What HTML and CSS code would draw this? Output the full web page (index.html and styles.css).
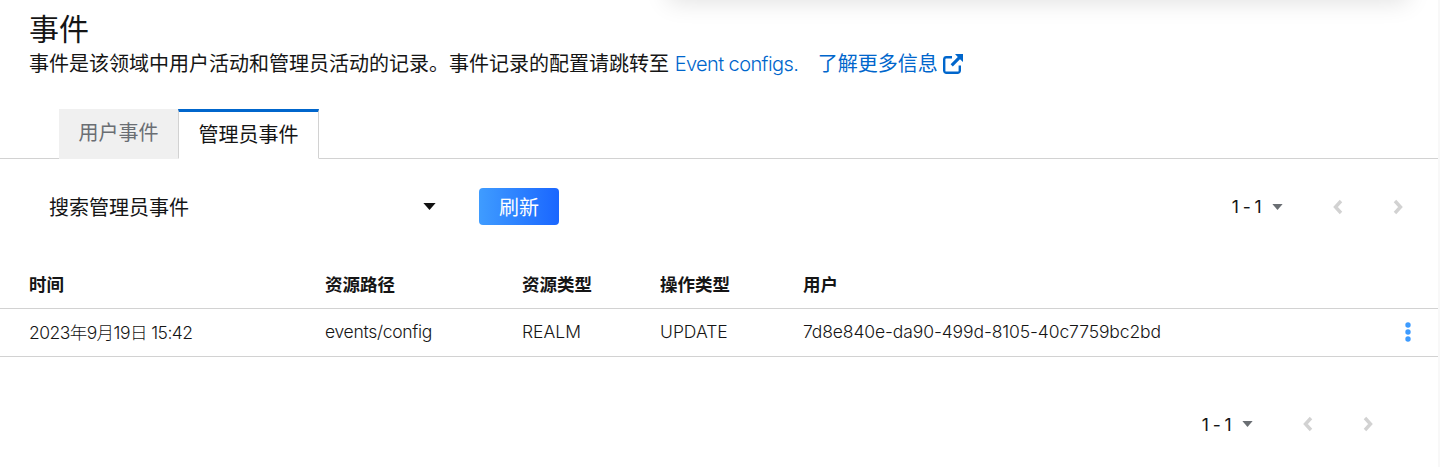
FILE: index.html
```html
<!DOCTYPE html>
<html lang="zh-CN">
<head>
<meta charset="UTF-8">
<title>事件</title>
<link rel="stylesheet" href="styles.css">
</head>
<body>
<div class="top-shadow"></div>
<header class="page-head">
    <h1>事件</h1>
    <p class="intro">事件是该领域中用户活动和管理员活动的记录。事件记录的配置请跳转至 <a href="#" class="configs">Event configs.</a>
        <a href="#" class="more">了解更多信息<svg class="ext-icon" viewBox="0 0 20 20"><path d="M9 3.200H3A2 2 0 0 0 1.200 5V17A2 2 0 0 0 3 18.800H15A2 2 0 0 0 16.800 17V11.500" fill="none" stroke="#06c" stroke-width="2.400"/><path d="M12 0H20V8L17 5.200L9.800 12.400L7.600 10.200L14.800 3Z" fill="#06c"/></svg></a>
    </p>
</header>

<nav class="tabs">
    <a href="#" class="tab">用户事件</a>
    <a href="#" class="tab active">管理员事件</a>
</nav>

<div class="toolbar">
    <div class="search-select">
        <span>搜索管理员事件</span>
        <svg class="caret" viewBox="0 0 14 8"><path d="M0 0H14L7 8Z" fill="#111"/></svg>
    </div>
    <button class="refresh">刷新</button>
    <div class="pager">
        <span class="range">1 - 1</span>
        <svg class="pager-caret" viewBox="0 0 12 7"><path d="M0 0H12L6 7Z" fill="#6a6e73"/></svg>
        <svg class="chev" viewBox="0 0 10 16"><path d="M8 2L2.500 8L8 14" fill="none" stroke="#d2d2d2" stroke-width="3.400"/></svg>
        <svg class="chev" viewBox="0 0 10 16"><path d="M2 2L7.500 8L2 14" fill="none" stroke="#d2d2d2" stroke-width="3.400"/></svg>
    </div>
</div>

<table class="events">
    <thead>
        <tr>
            <th class="col-time">时间</th>
            <th class="col-path">资源路径</th>
            <th class="col-type">资源类型</th>
            <th class="col-op">操作类型</th>
            <th>用户</th>
            <th class="col-menu"></th>
        </tr>
    </thead>
    <tbody>
        <tr>
            <td class="col-time">2023年9月19日 15:42</td>
            <td class="col-path">events/config</td>
            <td class="col-type">REALM</td>
            <td class="col-op">UPDATE</td>
            <td class="col-user">7d8e840e-da90-499d-8105-40c7759bc2bd</td>
            <td class="col-menu">
                <svg class="kebab" viewBox="0 0 6 20"><circle cx="3" cy="3" r="2.700"/><circle cx="3" cy="10" r="2.700"/><circle cx="3" cy="17" r="2.700"/></svg>
            </td>
        </tr>
    </tbody>
</table>

<div class="foot-pager">
    <div class="pager">
        <span class="range">1 - 1</span>
        <svg class="pager-caret" viewBox="0 0 12 7"><path d="M0 0H12L6 7Z" fill="#6a6e73"/></svg>
        <svg class="chev" viewBox="0 0 10 16"><path d="M8 2L2.500 8L8 14" fill="none" stroke="#d2d2d2" stroke-width="3.400"/></svg>
        <svg class="chev" viewBox="0 0 10 16"><path d="M2 2L7.500 8L2 14" fill="none" stroke="#d2d2d2" stroke-width="3.400"/></svg>
    </div>
</div>
</body>
</html>
```

FILE: styles.css
```css
* {
    box-sizing: border-box;
}
html {
    height: 467px;
    overflow: hidden;
    background: #f8f8f8;
}
body {
    margin: 0;
    width: 1438px;
    height: 467px;
    overflow: hidden;
    position: relative;
    background: #fff;
    color: #151515;
    font-family: "Inter", "Noto Sans CJK SC", sans-serif;
    font-size: 17.5px;
    font-weight: 300;
}
a {
    color: #06c;
    text-decoration: none;
}

/* leftover shadow of the menu scrolled off above */
.top-shadow {
    position: absolute;
    top: -40px;
    left: 668px;
    width: 740px;
    height: 40px;
    box-shadow: 0 2px 24px rgba(3, 3, 3, 0.12);
}

.page-head {
    padding: 10px 29px 0;
    height: 109px;
}
h1 {
    margin: 0;
    font-size: 30px;
    font-weight: 400;
    line-height: 39px;
}
.intro {
    margin: 0;
    font-size: 20px;
    font-weight: 400;
    line-height: 30px;
    color: #151515;
}
.configs {
    font-weight: 300;
    letter-spacing: -0.6px;
}
.more {
    margin-left: 14px;
}
.ext-icon {
    width: 20px;
    height: 20px;
    vertical-align: -3px;
    margin-left: 5px;
}

.tabs {
    display: flex;
    height: 50px;
    padding-left: 59px;
    border-bottom: 1px solid #d2d2d2;
}
.tab {
    height: 50px;
    padding: 0 19.5px;
    background: #f0f0f0;
    color: #6a6e73;
    font-size: 20px;
    font-weight: 400;
    line-height: 49px;
    white-space: nowrap;
}
.tab.active {
    background: #fff;
    color: #151515;
    border-top: 3px solid #06c;
    border-left: 1px solid #d2d2d2;
    border-right: 1px solid #d2d2d2;
    border-bottom: 1px solid #fff;
    line-height: 46px;
}

.toolbar {
    display: flex;
    align-items: center;
    height: 37px;
    margin-top: 29px;
    padding-left: 29px;
}
.search-select {
    display: flex;
    align-items: center;
    justify-content: space-between;
    width: 408px;
    padding: 0 1px 0 20px;
    font-size: 20px;
    font-weight: 400;
    color: #151515;
}
.caret {
    width: 13px;
    height: 7px;
}
.refresh {
    width: 80px;
    height: 37px;
    margin-left: 42px;
    border: none;
    border-radius: 4px;
    background: linear-gradient(90deg, #3f9cff, #1a66ff);
    color: #fff;
    font-family: inherit;
    font-size: 20px;
    font-weight: 400;
    cursor: pointer;
}
.pager {
    display: flex;
    align-items: center;
    margin-left: auto;
    padding-right: 35px;
    font-size: 17.5px;
    font-weight: 400;
}
.range {
    letter-spacing: -0.6px;
}
.pager-caret {
    width: 11px;
    height: 6px;
    margin-left: 11px;
}
.chev {
    width: 10px;
    height: 16px;
    margin-left: 50px;
}

.events {
    width: 100%;
    margin-top: 36px;
    border-collapse: collapse;
    table-layout: fixed;
}
.events th, .events td {
    padding: 0 0 1px;
    text-align: left;
    color: #151515;
    border-bottom: 1px solid #d2d2d2;
}
.events th {
    height: 47px;
    font-size: 17.5px;
    font-weight: 700;
}
.events td {
    height: 48px;
    font-size: 17.5px;
    font-weight: 300;
}
.events .col-time {
    width: 325px;
    padding-left: 29px;
}
.events td.col-time {
    letter-spacing: -0.55px;
}
.col-path {
    width: 197px;
}
.events td.col-path {
    letter-spacing: -0.3px;
}
.col-type {
    width: 138px;
}
.col-op {
    width: 143px;
}
.events td.col-user {
    letter-spacing: -0.11px;
}
.col-menu {
    width: 60px;
}
.events td.col-menu {
    padding: 0;
}
.kebab {
    display: block;
    width: 6px;
    height: 20px;
    margin-left: 27px;
    fill: #3d9bff;
}

.foot-pager {
    display: flex;
    margin-top: 57px;
    padding-right: 30px;
}
```
